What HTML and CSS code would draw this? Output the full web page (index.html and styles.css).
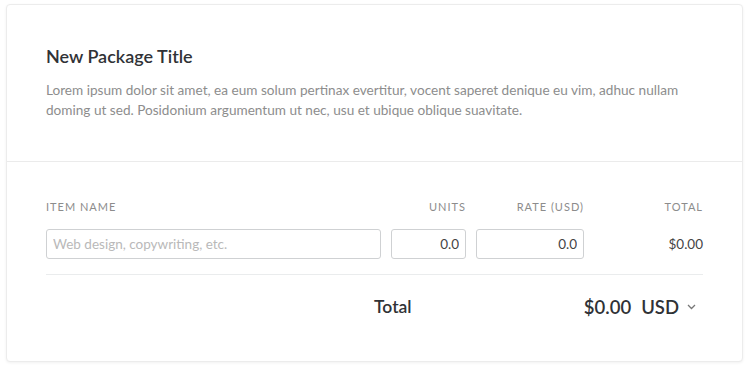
FILE: index.html
```html
<!DOCTYPE html>
<html lang="en">
<head>
  <meta charset="UTF-8" />
  <meta name="viewport" content="width=device-width, initial-scale=1.0" />
  <title>New Package</title>
  <link rel="stylesheet" href="styles.css">
</head>
<body>
  <div class="package">
    <div class="package-head">
      <h2>New Package Title</h2>
      <p>Lorem ipsum dolor sit amet, ea eum solum pertinax evertitur, vocent saperet denique eu vim, adhuc nullam doming ut sed. Posidonium argumentum ut nec, usu et ubique oblique suavitate.</p>
    </div>

    <div class="package-body">
      <div class="items">
        <span class="col-label">Item Name</span>
        <span class="col-label right">Units</span>
        <span class="col-label right">Rate (USD)</span>
        <span class="col-label right">Total</span>

        <input type="text" placeholder="Web design, copywriting, etc.">
        <input type="text" class="num" value="0.0">
        <input type="text" class="num" value="0.0">
        <span class="line-total">$0.00</span>
      </div>

      <div class="summary">
        <span class="summary-label">Total</span>
        <span class="summary-amount">$0.00</span>
        <span class="currency">USD
          <svg width="9" height="6" viewBox="0 0 9 6"><path d="M1 1l3.5 3.5L8 1" fill="none" stroke="#777" stroke-width="1.3"/></svg>
        </span>
      </div>
    </div>
  </div>
</body>
</html>
```

FILE: styles.css
```css
* {
  box-sizing: border-box;
}
body {
  font-family: Lato, "Open Sans", sans-serif;
  margin: 0;
  padding: 4px 6px;
  background: #fff;
  color: #333;
}
.package {
  border: 1px solid #ececec;
  border-radius: 4px;
  box-shadow: 0 1px 3px rgba(0, 0, 0, 0.06);
  background: #fff;
}
.package-head {
  padding: 39px 39px 41px;
  border-bottom: 1px solid #ebebeb;
}
h2 {
  margin: 0 0 12px;
  font-size: 18px;
  font-weight: 600;
  line-height: 24px;
  color: #303236;
}
.package-head p {
  margin: 0;
  font-size: 13.6px;
  line-height: 20px;
  color: #8d8d8d;
}
.package-body {
  padding: 37px 39px 42px;
}
.items {
  display: grid;
  grid-template-columns: 335px 75px 108px 1fr;
  column-gap: 10px;
  row-gap: 14px;
  align-items: center;
  padding-bottom: 15px;
  border-bottom: 1px solid #eaeced;
}
.col-label {
  font-size: 11px;
  line-height: 16px;
  letter-spacing: 1px;
  text-transform: uppercase;
  color: #8c8c8c;
}
.right {
  text-align: right;
}
input {
  height: 30px;
  padding: 0 6px;
  border: 1px solid #cfd1d3;
  border-radius: 3px;
  font-family: inherit;
  font-size: 13.5px;
  color: #444;
  width: 100%;
}
input::placeholder {
  color: #b9b9b9;
}
input.num {
  text-align: right;
}
.line-total {
  text-align: right;
  font-size: 13.5px;
  color: #444;
}
.summary {
  display: flex;
  align-items: center;
  padding-top: 20px;
  line-height: 24px;
}
.summary-label {
  margin-left: 328px;
  font-size: 17.5px;
  font-weight: 600;
  color: #303236;
}
.summary-amount {
  margin-left: auto;
  font-size: 18.5px;
  font-weight: 600;
  color: #303236;
}
.currency {
  display: flex;
  align-items: center;
  gap: 8px;
  margin-left: 10px;
  margin-right: 7px;
  font-size: 18.5px;
  font-weight: 600;
  color: #303236;
}
```
